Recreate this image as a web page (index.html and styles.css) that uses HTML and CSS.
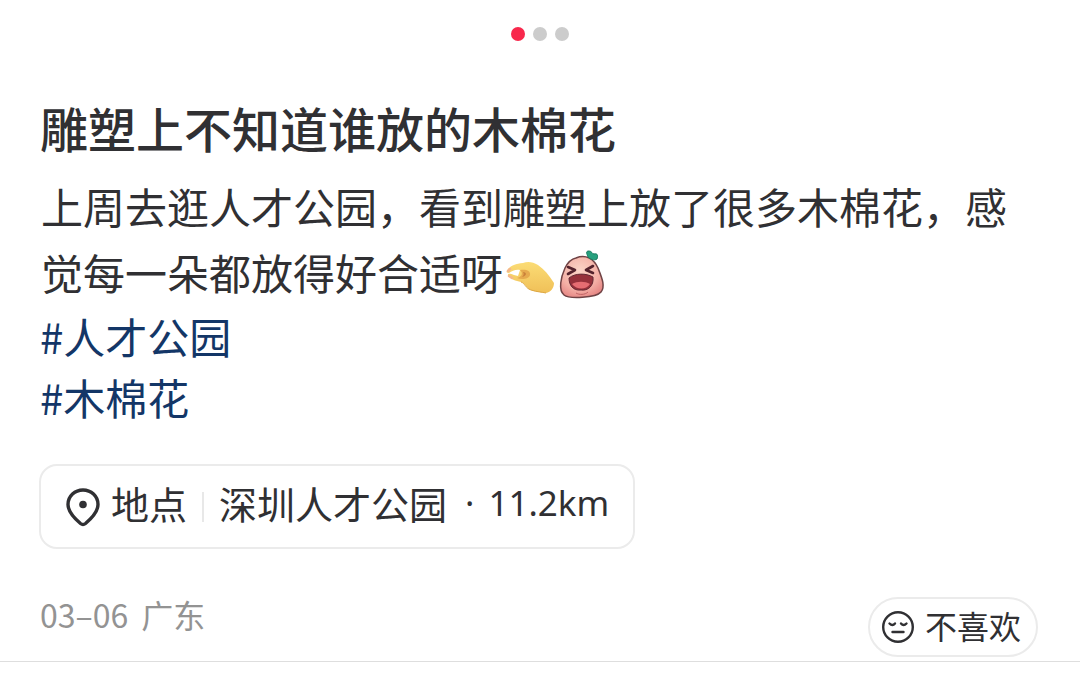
FILE: index.html
```html
<!DOCTYPE html>
<html lang="zh-CN">
<head>
<meta charset="utf-8">
<meta name="viewport" content="width=device-width, initial-scale=1">
<title>雕塑上不知道谁放的木棉花</title>
<link rel="stylesheet" href="styles.css">
</head>
<body>
<article class="note">
  <div class="pager">
    <span class="dot dot-active"></span>
    <span class="dot"></span>
    <span class="dot"></span>
  </div>
  <div class="content">
    <h1 class="title">雕塑上不知道谁放的木棉花</h1>
    <p class="body">上周去逛人才公园，看到雕塑上放了很多木棉花，感觉每一朵都放得好合适呀<svg class="emoji" viewBox="0 0 50 50" aria-hidden="true">
        <defs>
          <linearGradient id="skin" x1="0" y1="0" x2="0" y2="1"><stop offset="0" stop-color="#fbdc75"/><stop offset="1" stop-color="#f0c058"/></linearGradient>
        </defs>
        <path d="M2 21C4 16 10 14 18 13C23 11 28 12 33 15C39 19 44 25 49 33C49 38 46 42 41 43C35 42 29 42 24 39C21 37 20 33 16 32C11 31 5 29 3 25C3 23 6 24 9 25L13 26L15 20C11 19 7 21 4 23C2 23 1 22 2 21Z" fill="url(#skin)"/>
        <path d="M15 20C20 19 26 20 25 25C24 29 17 30 12 28C16 27 19 24 15 20Z" fill="#e6aa4e"/>
        <path d="M18 22C22 22 22 26 17 27C19 25 19 24 18 22Z" fill="#c9803a"/>
        <path d="M3 21L5 19M4 26L7 28" stroke="#f4b78c" stroke-width="2.500" stroke-linecap="round"/>
        <path d="M16 32C20 33 20 38 26 40C32 42 37 42 41 43" fill="none" stroke="#dda743" stroke-width="1"/>
      </svg><svg class="emoji" viewBox="0 0 50 50" aria-hidden="true">
        <defs>
          <radialGradient id="peach" cx=".45" cy=".35" r=".7"><stop offset="0" stop-color="#fbd6c8"/><stop offset=".65" stop-color="#f4afa5"/><stop offset="1" stop-color="#e58583"/></radialGradient>
        </defs>
        <path d="M19 8C29 4 37 9 41 18C44 26 49 36 44 42C39 48 12 49 7 45C1 40 4 27 8 18C11 12 14 9 19 8Z" fill="url(#peach)" stroke="#704345" stroke-width="1.500"/>
        <path d="M31 7C30 4 28 1 32 1C35 1 35 4 37 4C41 3 41 6 40 9C37 11 33 9 31 7Z" fill="#27a07e" stroke="#187b61"/>
        <path d="M11 17L18 20L11 24M36 16L29 20L36 23" fill="none" stroke="#54232d" stroke-width="2.600" stroke-linecap="round" stroke-linejoin="round"/>
        <path d="M12 28C18 23 29 23 36 27C37 36 31 41 24 40C16 41 12 35 12 28Z" fill="#96313b" stroke="#642a34"/>
        <path d="M15 34C20 31 28 31 33 34C29 40 20 40 15 34Z" fill="#e56d72"/>
        <path d="M19 43C22 45 28 45 31 42" fill="none" stroke="#bf6264"/>
      </svg></p>
    <nav class="tags">
      <a class="tag" href="#park">#人才公园</a>
      <a class="tag" href="#kapok">#木棉花</a>
    </nav>
    <a class="place" href="#place">
      <svg class="pin" viewBox="0 0 38 40" aria-hidden="true">
        <path d="M19 3C27 3 34 9 34 17.500C34 25 28 31 21.500 36.500Q19 38.500 16.500 36.500C10 31 4 25 4 17.500C4 9 11 3 19 3Z" fill="none" stroke="#303033" stroke-width="3.400"/>
        <circle cx="19" cy="17.500" r="3.800" fill="#303033"/>
      </svg>
      <span class="place-text">地点</span>
      <span class="divider"></span>
      <span class="place-text">深圳人才公园</span>
      <span class="place-text distance"><span class="separator">·</span>11.2km</span>
    </a>
  </div>
  <footer class="meta">
    <div class="date"><span>03–06</span><span>广东</span></div>
    <button class="dislike" type="button">
      <svg class="face" viewBox="0 0 34 34" aria-hidden="true">
        <g fill="none" stroke="#303033" stroke-width="2.400" stroke-linecap="round">
          <circle cx="17" cy="17" r="14.800"/>
          <path d="M8.500 13.500Q11.500 16.500 14 13.500M20 13.500Q22.500 16.500 25.500 13.500M11.500 22H22.500"/>
        </g>
      </svg>
      <span class="dislike-text">不喜欢</span>
    </button>
  </footer>
</article>
</body>
</html>
```
FILE: styles.css
```css
* {
  box-sizing: border-box;
}

body {
  margin: 0;
  background: #fff;
  color: #303033;
  font-family: "Noto Sans CJK SC", sans-serif;
}

.note {
  padding-top: 27px;
}

.pager {
  display: flex;
  justify-content: center;
  gap: 8px;
}

.dot {
  width: 14px;
  height: 14px;
  border-radius: 50%;
  background: #ccc;
}

.dot-active {
  background: #f8284c;
}

.content {
  padding: 52px 48px 0 40px;
}

.title {
  margin: 0;
  font-size: 48px;
  font-weight: 500;
  line-height: 68px;
}

.body {
  margin: 12px 0 0;
  padding-left: 1px;
  font-size: 42px;
  line-height: 66px;
}

.emoji {
  width: 50px;
  height: 50px;
  margin-left: 2px;
  vertical-align: -10px;
}

.tags {
  display: flex;
  flex-direction: column;
  align-items: flex-start;
}

.tag {
  color: #133667;
  font-size: 42px;
  line-height: 61px;
  text-decoration: none;
}

.place {
  display: inline-flex;
  align-items: center;
  margin-top: 37px;
  margin-left: -1px;
  padding: 13px 24px 13px 23px;
  border: 2px solid #ebebeb;
  border-radius: 18px;
  color: inherit;
  font-size: 38px;
  line-height: 48px;
  text-decoration: none;
}

.place-text {
  padding-bottom: 7px;
}

.distance {
  font-family: "Noto Sans", sans-serif;
  font-size: 35px;
}

.separator {
  margin: 0 14px 0 18px;
}

.pin {
  width: 38px;
  height: 40px;
  margin-right: 9px;
}

.divider {
  width: 2px;
  height: 30px;
  margin: 0 15px;
  background: #e8e8e8;
}

.meta {
  display: flex;
  justify-content: space-between;
  margin-top: 48px;
  padding: 0 42px 4px 40px;
  border-bottom: 1px solid #dedede;
}

.date {
  display: flex;
  gap: 13px;
  color: #939393;
  font-size: 32px;
  line-height: 34px;
}

.dislike {
  display: flex;
  align-items: center;
  gap: 10px;
  height: 60px;
  padding: 0 15px 0 11px;
  border: 2px solid #ebebeb;
  border-radius: 30px;
  background: #fff;
  color: inherit;
  font-family: inherit;
  font-size: 32px;
  line-height: 48px;
}

.dislike-text {
  padding-bottom: 4px;
}

.face {
  width: 34px;
  height: 34px;
}
```
